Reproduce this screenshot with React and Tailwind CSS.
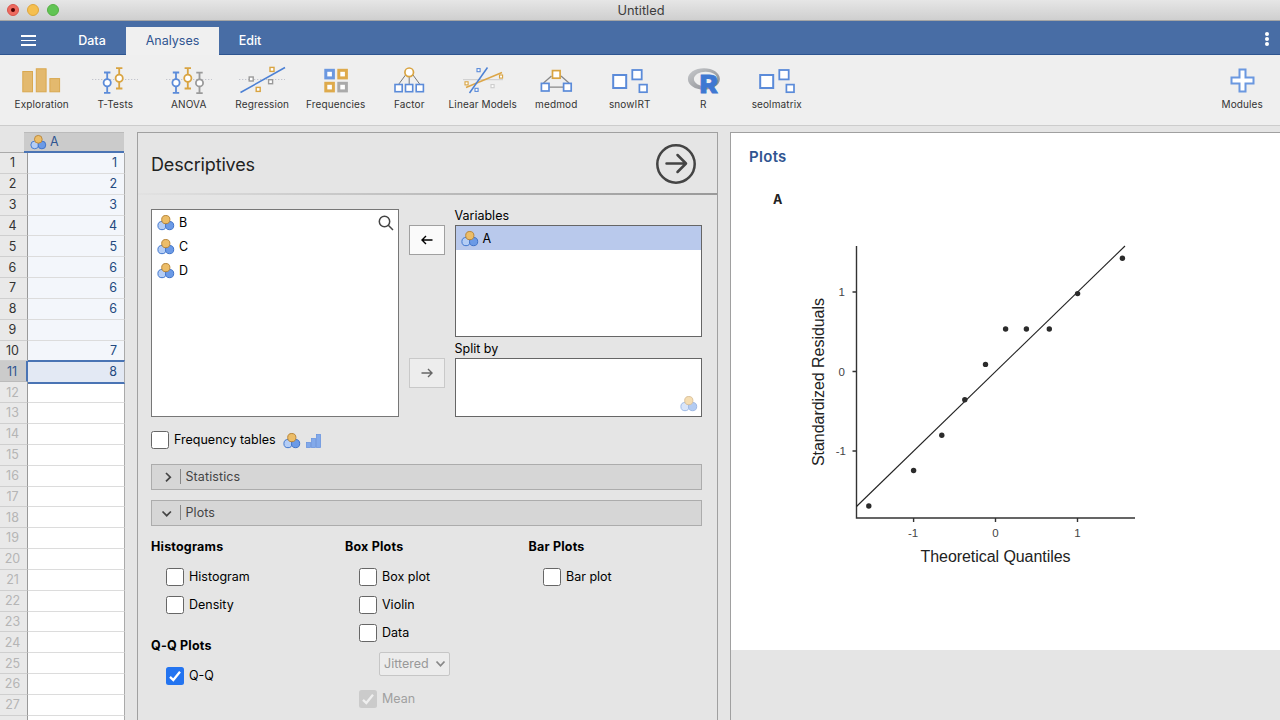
import { clsx } from "clsx";

const BLUE = "#5b8bd9";
const GOLD = "#d9a441";
const GRAY = "#9a9a9a";

const rows = [1, 2, 3, 4, 5, 6, 6, 6, "", 7, 8];

const points = [
  [868.8, 506], [913.6, 470.5], [941.8, 435.2], [964.8, 399.8], [985.5, 364.4],
  [1005.6, 329], [1026.4, 329], [1049.3, 329], [1077.6, 293.6], [1122.4, 258.2]
];

function NominalIcon({ className = "" }) {
  return (
    <svg width="18" height="18" viewBox="0 0 18 18" className={clsx("shrink-0", className)}>
      <circle cx="5" cy="11.6" r="4.1" fill="#b4cdf5" stroke="#4278cf" />
      <circle cx="12.6" cy="11.6" r="4.1" fill="#6b9ae6" stroke="#3f72c8" />
      <circle cx="8.8" cy="5.6" r="4.1" fill="#ecbd68" stroke="#b8863a" />
    </svg>
  );
}

function Square({ x, y, size, color, weight = 1.5, fill = "#fff" }) {
  return <rect x={x} y={y} width={size} height={size} fill={fill} stroke={color} strokeWidth={weight} />;
}

function ErrorBar({ x, y, color }) {
  return (
    <g stroke={color} strokeWidth="1.8" fill="#fff">
      <path d={`M${x} ${y - 10.2}V${y + 10.2}M${x - 3.2} ${y - 10.2}h6.4M${x - 3.2} ${y + 10.2}h6.4`} />
      <circle cx={x} cy={y} r="3.6" />
    </g>
  );
}

function Dots() {
  return <path d="M1.25 15.5H47" stroke="#b4b7c2" strokeWidth="1" strokeDasharray="1 2" />;
}

function SquaresIcon() {
  return (
    <>
      <Square x="7.2" y="11" size="13" color={BLUE} weight="2" />
      <Square x="26.3" y="6" size="9.4" color={BLUE} weight="1.8" />
      <Square x="33.4" y="20.6" size="7.6" color={BLUE} weight="1.7" />
    </>
  );
}

const tools = [
  {
    name: "Exploration",
    icon: (
      <g fill="#e3b96e" stroke="#d9a84f" strokeWidth="1">
        <rect x="4.8" y="7.5" width="9.7" height="20.3" />
        <rect x="18.3" y="4.8" width="9.8" height="23" />
        <rect x="31.9" y="14.6" width="9.7" height="13.2" />
      </g>
    )
  },
  {
    name: "T-Tests",
    icon: (
      <>
        <Dots />
        <ErrorBar x={16.2} y={18.7} color={BLUE} />
        <ErrorBar x={28.2} y={14.3} color={GOLD} />
      </>
    )
  },
  {
    name: "ANOVA",
    icon: (
      <>
        <Dots />
        <ErrorBar x={11} y={18.7} color={BLUE} />
        <ErrorBar x={22.8} y={14.3} color={GOLD} />
        <ErrorBar x={34.5} y={18.9} color={GRAY} />
      </>
    )
  },
  {
    name: "Regression",
    icon: (
      <>
        <Dots />
        <path d="M2.5 28.5L47 3.5" stroke="#4c80d4" strokeWidth="1.5" />
        <Square x="32" y="3.4" size="4" color={GOLD} weight="1.4" />
        <Square x="11.2" y="13" size="4" color={GRAY} weight="1.4" />
        <Square x="30.6" y="15.7" size="4" color={GRAY} weight="1.4" />
        <Square x="18.2" y="23.4" size="4" color={GOLD} weight="1.4" />
      </>
    )
  },
  {
    name: "Frequencies",
    icon: (
      <>
        <Square x="13.8" y="6.3" size="7.6" color="#6b98e0" weight="3" />
        <Square x="26.8" y="6.3" size="7.6" color="#deaa4c" weight="3" />
        <Square x="13.8" y="19.3" size="7.6" color="#deaa4c" weight="3" />
        <Square x="26.8" y="19.3" size="7.6" color="#aaaaaa" weight="3" />
      </>
    )
  },
  {
    name: "Factor",
    icon: (
      <>
        <path d="M24.2 12V21M20.5 11L13.5 20.5M28 11L35 20.5" stroke="#777" strokeWidth="1" />
        <circle cx="24.2" cy="8.3" r="4.3" fill="#fff" stroke={GOLD} strokeWidth="1.7" />
        <Square x="10" y="20.5" size="7.2" color={BLUE} weight="1.6" />
        <Square x="20.5" y="20.5" size="7.2" color={BLUE} weight="1.6" />
        <Square x="31.2" y="20.5" size="7.2" color={BLUE} weight="1.6" />
      </>
    )
  },
  {
    name: "Linear Models",
    icon: (
      <>
        <path d="M4 15.6H44" stroke="#d2d2d2" strokeWidth="1.2" />
        <path d="M7 23.5L43 8.5" stroke="#dca648" strokeWidth="1.5" />
        <path d="M10.5 29L28.5 3.5" stroke="#4c80d4" strokeWidth="1.5" />
        <Square x="18" y="4.6" size="3.1" color={BLUE} weight="1.1" />
        <Square x="40.5" y="11" size="3.1" color={GOLD} weight="1.1" />
        <Square x="6" y="17.8" size="3.1" color={GOLD} weight="1.1" />
        <Square x="16" y="24.3" size="3.1" color={BLUE} weight="1.1" />
        <Square x="32" y="20.6" size="3.1" color="#ccc" weight="1.1" />
      </>
    )
  },
  {
    name: "medmod",
    icon: (
      <>
        <path d="M19.5 12L11.5 19M29 12L37 19M17 23.2H31" stroke="#888" strokeWidth="1.3" />
        <Square x="20.5" y="6.6" size="7.6" color={GOLD} weight="1.7" />
        <Square x="9.4" y="19.4" size="7.6" color={BLUE} weight="1.7" />
        <Square x="31.6" y="19.4" size="7.6" color={BLUE} weight="1.7" />
      </>
    )
  },
  { name: "snowIRT", icon: <SquaresIcon /> },
  {
    name: "R",
    icon: (
      <>
        <defs>
          <linearGradient id="ring" x1="0" y1="0" x2="1" y2="1">
            <stop offset="0" stopColor="#c8cacd" />
            <stop offset="1" stopColor="#85878c" />
          </linearGradient>
        </defs>
        <path
          fill="url(#ring)"
          fillRule="evenodd"
          d="M24.9 4.3c8.9 0 16 4.7 16 10.7s-7.1 10.7-16 10.7-16-4.7-16-10.7S16 4.3 24.9 4.3zM26.7 7.7c-6.500 0-11.800 3.200-11.800 7.200s5.300 7.400 11.800 7.400 11.500-3.200 11.500-7.400-5-7.200-11.500-7.200z"
        />
        <text x="20.6" y="29" fontSize="25" fontWeight="800" fill="#3f78d2" stroke="#3f78d2" strokeWidth="0.8" textLength="18.5" lengthAdjust="spacingAndGlyphs">R</text>
      </>
    )
  },
  { name: "seolmatrix", icon: <SquaresIcon /> }
];

function Tool({ name, children }) {
  return (
    <div className="flex w-[73.5px] flex-col items-center">
      <svg width="48" height="32" viewBox="0 0 48 32" fill="none">{children}</svg>
      <span className="mt-[1px] text-[10px] leading-[14px] tracking-[0.12px] whitespace-nowrap text-[#333]">{name}</span>
    </div>
  );
}

function TitleBar() {
  return (
    <div className="relative flex h-[21px] items-center justify-center border-b border-[#a5a5a5] bg-linear-to-b from-[#e6e6e6] to-[#cfcfcf]">
      <div className="absolute top-1 left-[7px] flex gap-2">
        <span className="flex size-3 items-center justify-center rounded-full border border-[#d9554c] bg-[#ee6a5f]">
          <span className="size-1 rounded-full bg-[#4d0000]" />
        </span>
        <span className="size-3 rounded-full border border-[#dfa63c] bg-[#f5bf4f]" />
        <span className="size-3 rounded-full border border-[#55b043] bg-[#61c454]" />
      </div>
      <span className="mt-px ml-[2px] text-[12.8px] leading-5 text-[#3c3c3c]">Untitled</span>
    </div>
  );
}

function Ribbon() {
  return (
    <div className="flex h-[34px] items-end border-b border-[#2e5590] bg-[#486da5] text-[12.5px] text-white">
      <div className="flex h-[27px] w-[57px] items-center justify-center">
        <div className="flex w-[15px] flex-col gap-[3px]">
          <span className="h-[1.5px] bg-white" />
          <span className="h-[1.5px] bg-white" />
          <span className="h-[1.5px] bg-white" />
        </div>
      </div>
      <div className="flex h-[27px] w-[69px] items-center justify-center pt-[1px] pl-[1px] font-medium">Data</div>
      <div className="-mb-px flex h-[28px] w-[93px] items-center justify-center bg-[#f0f0f0] text-[#2f5591]">Analyses</div>
      <div className="flex h-[27px] w-[62px] items-center justify-center pt-[1px] font-medium">Edit</div>
      <div className="mr-[11px] mb-[8px] ml-auto flex flex-col gap-px">
        <span className="size-1 rounded-full bg-white" />
        <span className="size-1 rounded-full bg-white" />
        <span className="size-1 rounded-full bg-white" />
      </div>
    </div>
  );
}

function Toolbar() {
  return (
    <div className="flex h-[71px] border-b border-[#cccccc] bg-[#efefef] pt-[9px] pl-[5px]">
      {tools.map((tool) => (
        <Tool key={tool.name} name={tool.name}>{tool.icon}</Tool>
      ))}
      <div className="mr-[1px] ml-auto">
        <Tool name="Modules">
          <path d="M21.5 5.5h6v8h8v6h-8v8h-6v-8h-8v-6h8z" fill="#fff" stroke="#6b98e0" strokeWidth="2" />
        </Tool>
      </div>
    </div>
  );
}

function DataGrid() {
  return (
    <div className="w-[125px] shrink-0 overflow-hidden pt-[6px] text-[12.5px]">
      <div className="flex h-[21px]">
        <div className="w-[24px] border-b border-[#aaa]" />
        <div className="flex w-[100px] items-center gap-[3px] border-t border-b-2 border-t-[#bbb] border-b-[#4a74b4] bg-[#cbcbcb] pl-[6px] text-[#2f5591]">
          <NominalIcon className="size-[17px]" />
          <span>A</span>
        </div>
      </div>
      {Array.from({ length: 28 }, (_, i) => {
        const filled = i < 11;
        const active = i === 10;
        return (
          <div key={i} className="flex h-[20.85px]">
            <div
              className={clsx(
                "flex w-[28px] items-center justify-center border-r border-b pt-[1.5px] pr-[2px]",
                active ? "border-r-2 border-b-[#bbb] border-r-[#4a74b4] bg-[#cbcbcb] text-[#2f5591]" : "border-r-[#999] border-b-[#cfcfcf] bg-[#e9e9e9]",
                !filled && "text-[#b5b5b5]",
                filled && !active && "text-[#333]"
              )}
            >
              {i < 27 && i + 1}
            </div>
            <div
              className={clsx(
                "flex w-[97px] items-center justify-end border-r border-r-[#aaa] pr-[7px] text-[#234a80]",
                active && "relative -mt-[1.5px] -mb-[1.5px] border-y-2 border-y-[#4a74b4] bg-[#e3e9f4] pt-[1px]",
                !active && "border-b border-b-[#dcdcdc] pt-[1.5px]",
                filled && !active && "bg-[#f3f6fb]",
                !filled && "bg-white"
              )}
            >
              {rows[i]}
            </div>
          </div>
        );
      })}
    </div>
  );
}

function Checkbox({ label, checked, disabled, className = "" }) {
  return (
    <div className={clsx("flex h-[18px] items-center gap-[5px] text-[12.5px]", disabled ? "text-[#a0a0a0]" : "text-black", className)}>
      <span
        className={clsx(
          "flex size-[18px] shrink-0 items-center justify-center rounded-[2.5px]",
          !checked && "border border-[#666] bg-white",
          checked && (disabled ? "bg-[#cbcbcb]" : "bg-[#2374f0]")
        )}
      >
        {checked && (
          <svg width="16" height="16" viewBox="0 0 16 16" fill="none">
            <path d="M3 8.8L6.3 12L13 3.7" stroke={disabled ? "#efefef" : "#fff"} strokeWidth="2.3" />
          </svg>
        )}
      </span>
      <span className="whitespace-nowrap">{label}</span>
    </div>
  );
}

function Variable({ name, selected }) {
  return (
    <div className={clsx("flex h-[24px] items-center gap-[4px] pl-[5px]", selected && "bg-[#b9c9ec] pt-[2px]")}>
      <NominalIcon />
      <span>{name}</span>
    </div>
  );
}

function Arrow({ left }) {
  return (
    <svg width="14" height="12" viewBox="0 0 14 12" fill="none" stroke="currentColor" strokeWidth="1.4">
      {left ? <path d="M12.5 6H2M6 2L2 6L6 10" /> : <path d="M1.5 6H12M8 2L12 6L8 10" />}
    </svg>
  );
}

function Section({ title, open }) {
  return (
    <div className="flex h-[26px] items-center border border-[#acacac] bg-[#d6d6d6] pl-[9px] text-[12.5px] text-[#444]">
      <svg width="14" height="14" viewBox="0 0 14 14" fill="none" stroke="#444" strokeWidth="1.7">
        {open ? <path d="M1.5 5.5L5.7 9.7L9.9 5.5" /> : <path d="M5 3L9.3 7.2L5 11.4" />}
      </svg>
      <span className="-mt-[1px] ml-[5px] h-[15px] w-px bg-[#888]" />
      <span className="ml-[4.5px] tracking-[0.1px]">{title}</span>
    </div>
  );
}

function OptionsPanel() {
  return (
    <div className="mt-[6px] ml-[12px] flex w-[581px] shrink-0 flex-col overflow-hidden border border-b-0 border-[#a0a0a0] bg-[#e5e5e5] text-[12.5px] text-black">
      <div className="flex h-[60px] shrink-0 items-center justify-between pr-[20px] pl-[13px]">
        <h1 className="mt-[2px] text-[18px] tracking-[-0.15px] text-[#222]">Descriptives</h1>
        <svg width="42" height="42" viewBox="0 0 42 42" fill="none" stroke="#444" strokeWidth="2.5" className="mt-px">
          <circle cx="21" cy="21" r="18.7" />
          <path d="M11.5 20.5H30M22.5 12L31 20.5L22.5 29" strokeLinejoin="round" strokeLinecap="round" />
        </svg>
      </div>
      <div className="h-[2px] shrink-0 bg-linear-to-r from-[#e2e2e2] to-[#999]" />

      <div className="mt-[14px] flex shrink-0 pl-[13px]">
        <div className="relative h-[208px] w-[248px] border border-[#777] bg-white py-px">
          <Variable name="B" />
          <Variable name="C" />
          <Variable name="D" />
          <svg width="18" height="18" viewBox="0 0 18 18" fill="none" stroke="#444" strokeWidth="1.5" className="absolute top-[4px] right-[3px]">
            <circle cx="7.5" cy="7.5" r="5.2" />
            <path d="M11.3 11.3L16 16" />
          </svg>
        </div>
        <div className="mr-[9.5px] ml-[10px] mt-[16px] flex w-[36px] flex-col gap-[103px]">
          <span className="flex h-[30px] items-center justify-center border border-[#a0a0a0] bg-[#fafafa]"><Arrow left /></span>
          <span className="flex h-[30px] items-center justify-center border border-[#c9c9c9] bg-[#ededed] text-[#666]"><Arrow /></span>
        </div>
        <div className="w-[247.5px]">
          <div className="-mt-[2px] h-[18px] leading-[18px]">Variables</div>
          <div className="h-[112px] border border-[#666] bg-white">
            <Variable name="A" selected />
          </div>
          <div className="h-[21px] pt-[3px] leading-[18px]">Split by</div>
          <div className="flex h-[59px] items-end justify-end border border-[#666] bg-white pr-[3px] pb-[3px]">
            <NominalIcon className="opacity-50" />
          </div>
        </div>
      </div>

      <div className="mt-[14px] flex h-[18px] shrink-0 items-center pl-[13px]">
        <Checkbox label="Frequency tables" />
        <NominalIcon className="mt-px ml-[7.5px]" />
        <svg width="15" height="14" viewBox="0 0 15 14" fill="#82a9ea" stroke="#6b96df" strokeWidth="0.8" className="mt-px ml-[4.5px]">
          <rect x="0.5" y="8.5" width="4" height="5" />
          <rect x="5.5" y="4.5" width="4" height="9" />
          <rect x="10.5" y="0.5" width="4" height="13" />
        </svg>
      </div>

      <div className="mt-[15px] ml-[13px] flex w-[551px] shrink-0 flex-col gap-[10px]">
        <Section title="Statistics" />
        <Section title="Plots" open />
      </div>

      <div className="mt-[12px] ml-[13px] grid shrink-0 grid-cols-[194px_183.5px_1fr]">
        <div>
          <h2 className="leading-[18px] font-bold tracking-[0.2px]">Histograms</h2>
          <div className="mt-[12px] ml-[15px] flex flex-col gap-[10px]">
            <Checkbox label="Histogram" />
            <Checkbox label="Density" />
          </div>
          <h2 className="mt-[23px] leading-[18px] font-bold tracking-[0.2px]">Q-Q Plots</h2>
          <Checkbox label="Q-Q" checked className="mt-[12px] ml-[15px]" />
        </div>
        <div>
          <h2 className="leading-[18px] font-bold tracking-[0.2px]">Box Plots</h2>
          <div className="mt-[12px] ml-[14px] flex flex-col gap-[10px]">
            <Checkbox label="Box plot" />
            <Checkbox label="Violin" />
            <Checkbox label="Data" />
          </div>
          <div className="mt-[10px] ml-[34px] flex h-[24px] w-[71px] items-center justify-between rounded-[2px] border border-[#c6c6c6] bg-[#ececec] pr-[3px] pl-[4px] text-[#999]">
            Jittered
            <svg width="11" height="8" viewBox="0 0 11 8" fill="none" stroke="#888" strokeWidth="1.8">
              <path d="M1.5 1.5L5.5 5.8L9.5 1.5" />
            </svg>
          </div>
          <Checkbox label="Mean" checked disabled className="mt-[14px] ml-[14px]" />
        </div>
        <div>
          <h2 className="leading-[18px] font-bold tracking-[0.2px]">Bar Plots</h2>
          <Checkbox label="Bar plot" className="mt-[12px] ml-[14.5px]" />
        </div>
      </div>
    </div>
  );
}

function QQPlot() {
  return (
    <svg width="350" height="345" viewBox="800 235 350 345" className="mt-[26px] ml-[69px] font-['Liberation_Sans',sans-serif]">
      <path d="M856.5 246V518H1135" fill="none" stroke="#333" strokeWidth="1.4" />
      <path d="M852.5 292H856M852.5 371.5H856M852.5 451H856M913.6 518V522M995.5 518V522M1077.5 518V522" stroke="#333" strokeWidth="1.4" />
      <path d="M856.5 506.5L1125 246" stroke="#222" strokeWidth="1.1" />
      {points.map(([x, y]) => (
        <circle key={x} cx={x} cy={y} r="2.7" fill="#2b2b2b" />
      ))}
      <g fontSize="11.5" fill="#444" textAnchor="end">
        <text x="845" y="296">1</text>
        <text x="845" y="375.5">0</text>
        <text x="846" y="455">-1</text>
      </g>
      <g fontSize="11.5" fill="#444" textAnchor="middle">
        <text x="913" y="537">-1</text>
        <text x="995.5" y="537">0</text>
        <text x="1077.5" y="537">1</text>
      </g>
      <g fontSize="16" fill="#222" textAnchor="middle">
        <text x="995.5" y="562" textLength="150">Theoretical Quantiles</text>
        <text transform="translate(824 382) rotate(-90)" textLength="168">Standardized Residuals</text>
      </g>
    </svg>
  );
}

function Results() {
  return (
    <div className="mt-[6px] ml-[12px] flex-1 border-t border-l border-[#a0a0a0]">
      <div className="h-[517px] bg-white pt-[14px]">
        <h2 className="ml-[18px] text-[15px] leading-[19px] font-semibold tracking-[0.3px] text-[#2f5591]">Plots</h2>
        <h3 className="mt-[25px] ml-[42px] text-[12.5px] leading-[18px] font-bold text-[#222]">A</h3>
        <QQPlot />
      </div>
    </div>
  );
}

function App() {
  return (
    <div className="flex h-[720px] w-[1280px] flex-col overflow-hidden bg-[#e5e5e5] font-['Inter',sans-serif]">
      <TitleBar />
      <Ribbon />
      <Toolbar />
      <div className="flex min-h-0 flex-1">
        <DataGrid />
        <OptionsPanel />
        <Results />
      </div>
    </div>
  );
}

export default App;
